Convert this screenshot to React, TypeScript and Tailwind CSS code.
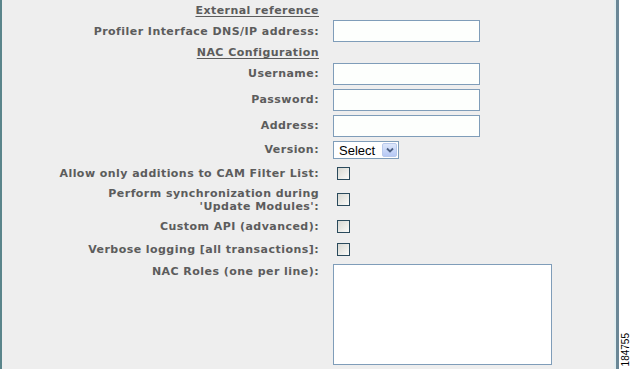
import React from "react";

const label =
  "w-[319px] shrink-0 text-right text-[11px] font-bold text-[#5c5c5c] leading-[13px] tracking-[0.45px]";

function TextBox() {
  return (
    <div className="w-[147px] h-[22px] border border-[#7f9db9] bg-[#fdfffd]" />
  );
}

function Check() {
  return (
    <div className="ml-[4px] w-[13px] h-[13px] border border-[#2a4a5c] bg-gradient-to-br from-[#d8d8d2] to-[#fbfbf9]" />
  );
}

function Heading({ children }: { children: React.ReactNode }) {
  return (
    <div className="flex items-center h-[21px]">
      <div className={label + " underline underline-offset-2"}>{children}</div>
    </div>
  );
}

export default function App() {
  return (
    <div
      className="flex w-[632px] h-[369px] bg-white"
      style={{ fontFamily: "'DejaVu Sans', Verdana, sans-serif" }}
    >
      <div className="w-[619px] h-[369px] bg-[#eeeeee] border-l-2 border-l-[#5a858b] border-r-[3px] border-r-[#6a8796] shadow-[inset_-2px_0_0_#e2eef0]">
        <div className="-ml-[2px]">
          <div className="flex items-center h-[20px]">
            <div className={label + " underline underline-offset-2"}>External reference</div>
          </div>

          <div className="flex items-center h-[22px] gap-[14px]">
            <div className={label}>Profiler Interface DNS/IP address:</div>
            <TextBox />
          </div>

          <Heading>NAC Configuration</Heading>

          {["Username:", "Password:", "Address:"].map((t) => (
            <div key={t} className="flex items-start h-[26px] gap-[14px]">
              <div className={label + " !leading-[22px]"}>{t}</div>
              <TextBox />
            </div>
          ))}

          <div className="flex items-start h-[21px] gap-[14px]">
            <div className={label + " !leading-[18px]"}>Version:</div>
            <div className="w-[66px] h-[18px] border border-[#7f9db9] bg-white flex items-center justify-between pl-[5px] pr-[1px]">
              <span className="text-[13px] text-black leading-none" style={{ fontFamily: "'Liberation Sans', Arial, sans-serif" }}>
                Select
              </span>
              <div className="w-[15px] h-[14px] rounded-[2px] border border-[#b8c9ec] bg-gradient-to-b from-[#dde7fb] to-[#b6c8f4] flex items-center justify-center">
                <svg width="8" height="6" viewBox="0 0 8 6">
                  <path d="M1 1.5 L4 4.5 L7 1.5" fill="none" stroke="#4d6185" strokeWidth="1.8" />
                </svg>
              </div>
            </div>
          </div>

          <div className="flex items-center h-[22px] gap-[14px]">
            <div className={label}>Allow only additions to CAM Filter List:</div>
            <Check />
          </div>

          <div className="flex items-center h-[31px] gap-[14px]">
            <div className={label}>
              Perform synchronization during
              <br />
              'Update Modules':
            </div>
            <Check />
          </div>

          <div className="flex items-center h-[23px] gap-[14px]">
            <div className={label}>Custom API (advanced):</div>
            <Check />
          </div>

          <div className="flex items-center h-[23px] gap-[14px]">
            <div className={label}>Verbose logging [all transactions]:</div>
            <Check />
          </div>

          <div className="flex items-start pt-[3px] gap-[14px]">
            <div className={label + " pt-[1px]"}>NAC Roles (one per line):</div>
            <div className="w-[219px] h-[101px] border border-[#7f9db9] bg-white" />
          </div>
        </div>
      </div>

      <div className="flex-1 flex items-end justify-center pb-[3px]">
        <div
          className="text-[10px] text-black leading-none"
          style={{ writingMode: "vertical-rl", transform: "rotate(180deg)", fontFamily: "'Liberation Sans', Arial, sans-serif" }}
        >
          184755
        </div>
      </div>
    </div>
  );
}
